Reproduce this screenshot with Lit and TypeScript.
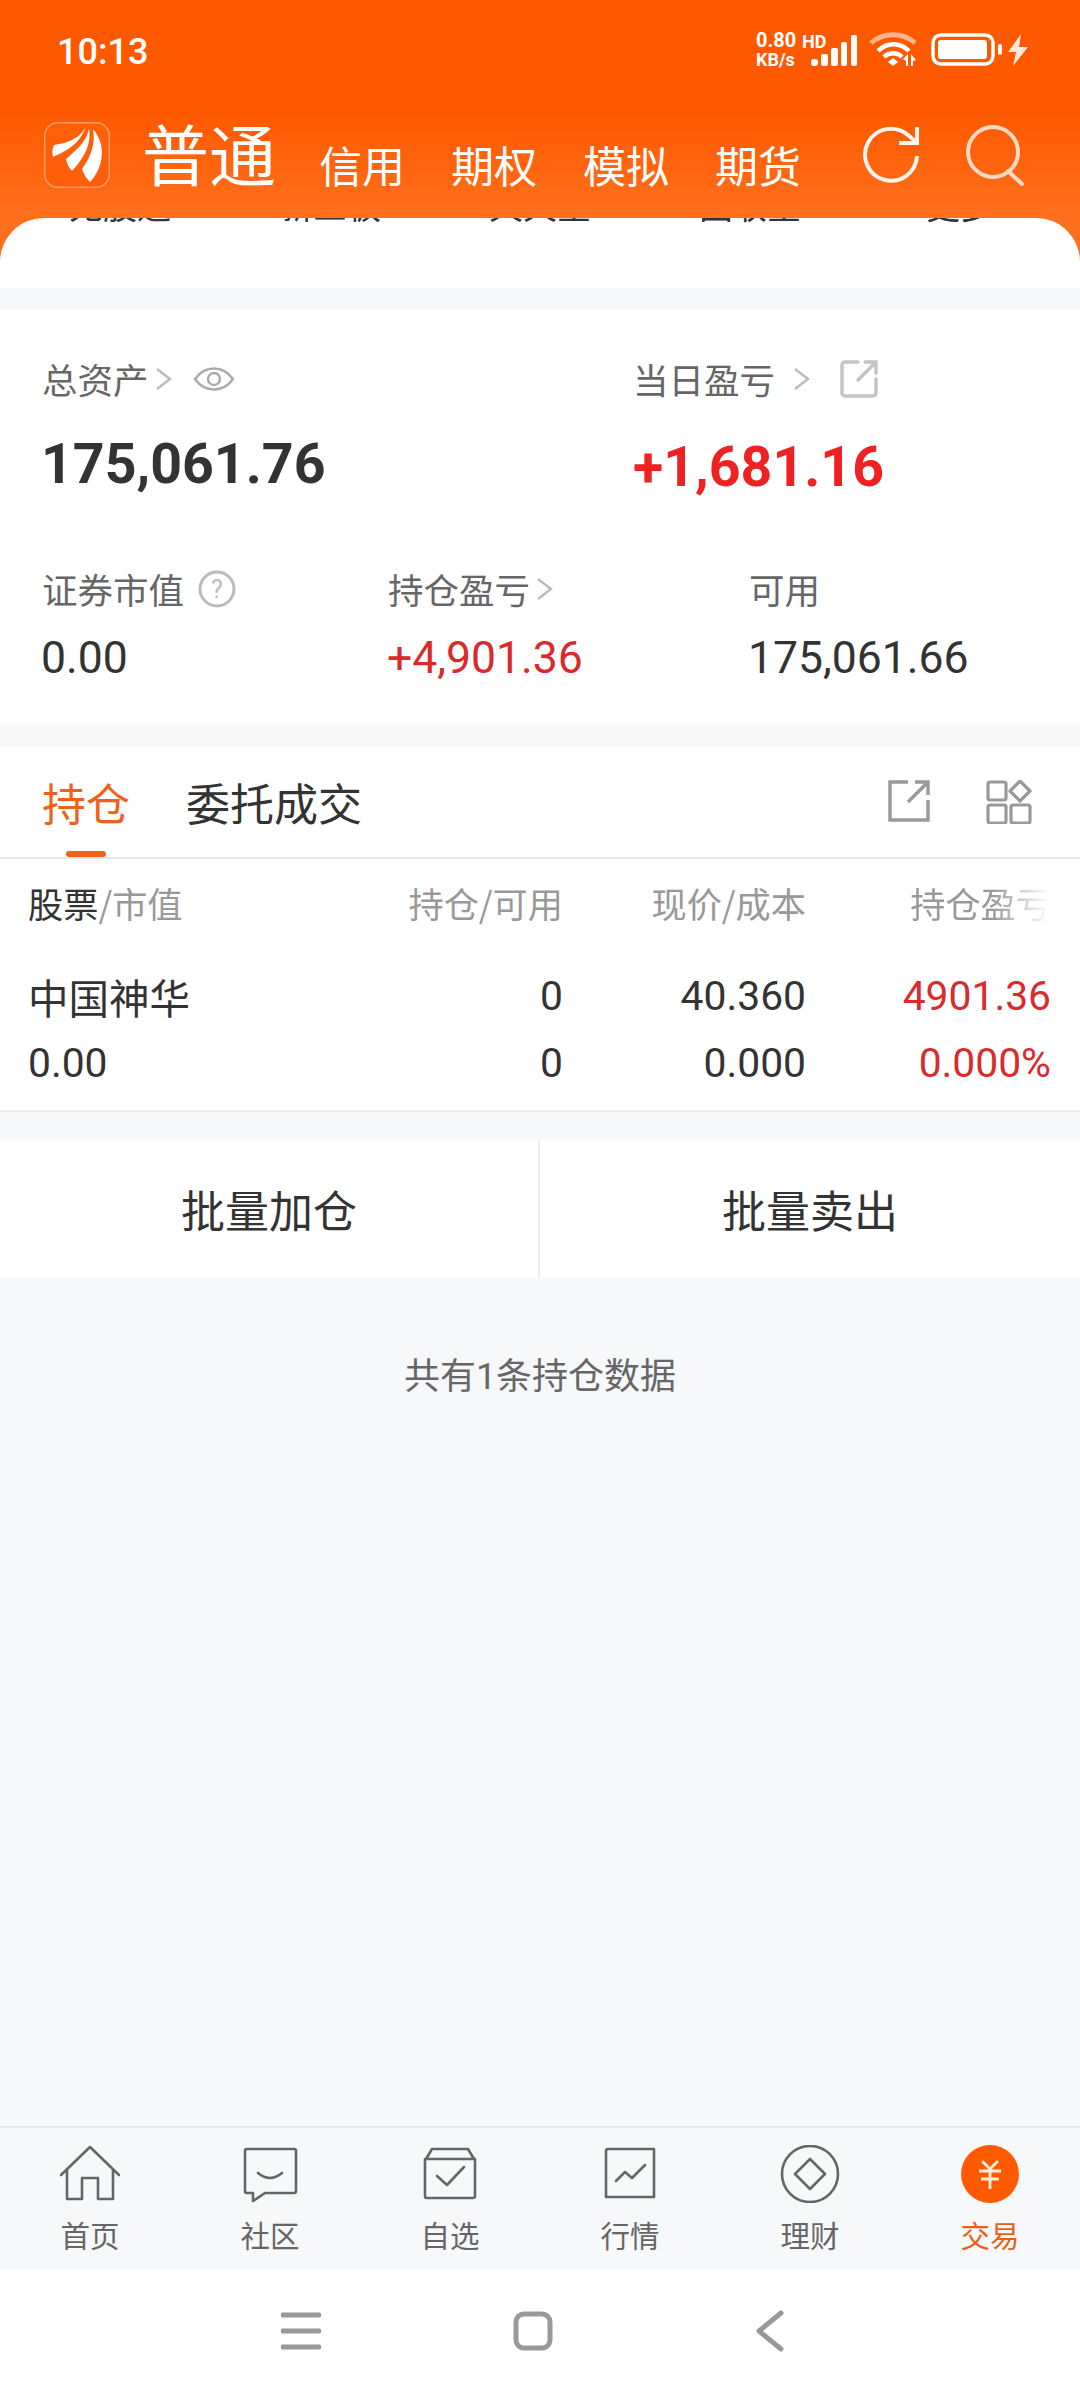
import { LitElement, html, css, svg } from "lit";
import { customElement } from "lit/decorators.js";

const navIcons = [
  svg`<path d="M1 30 L30 2 L59 30 M7 25 V54 H22 V33 H38 V54 H53 V25" />`,
  svg`<path d="M7 4 H54 a2 2 0 0 1 2 2 V46 a2 2 0 0 1 -2 2 H25 L13 56 V48 H7 a2 2 0 0 1 -2 -2 V6 a2 2 0 0 1 2 -2 Z M18 28 Q30 38 42 28" />`,
  svg`<path d="M6 14 L12 4 H48 L54 14 M5 14 H55 V51 a2 2 0 0 1 -2 2 H7 a2 2 0 0 1 -2 -2 Z M17 31 L27 40 L44 22" />`,
  svg`<path d="M8 4 H54 V52 H6 V6 a2 2 0 0 1 2 -2 Z M16 36 L25 27 L32 33 L45 20" />`,
  svg`<circle cx="30" cy="29" r="28" /><path d="M30 14 L45 29 L30 44 L15 29 Z" />`,
];
const navItems = ["首页", "社区", "自选", "行情", "理财"];

@customElement("app-root")
export class AppRoot extends LitElement {
  static styles = css`
    :host {
      display: flex;
      flex-direction: column;
      width: 1080px;
      height: 2400px;
      background: #f7f8fa;
      font-family: Roboto, "Noto Sans CJK SC", sans-serif;
      color: #333;
      overflow: hidden;
    }
    svg { display: block; flex: none; }
    .top {
      height: 218px;
      flex: none;
      background: linear-gradient(#ff5900 0, #ff5900 112px, #ff701d 218px);
      color: #fff;
      box-sizing: border-box;
      position: relative;
      z-index: 2;
    }
    .status {
      height: 100px;
      display: flex;
      align-items: center;
      padding: 0 57px;
      box-sizing: border-box;
    }
    .time { font-size: 36px; font-weight: 500; flex: 1; padding-top: 3px; }
    .speed { display: flex; flex-direction: column; font-weight: 700; font-size: 20px; line-height: 19px; width: 54px; }
    .speed span:last-child { font-size: 18px; }
    .hd { font-size: 18px; font-weight: 700; position: absolute; left: 802px; top: 31px; }
    .status-icons { display: flex; align-items: center; margin-right: -6px; }
    .tabs {
      display: flex;
      align-items: center;
      padding-left: 44px;
      height: 88px;
      margin-top: 11px;
    }
    .logo { margin-right: 32px; }
    .main-tab { font-size: 67px; line-height: 88px; font-family: "Noto Sans CJK SC", sans-serif; margin-right: 43px; margin-top: -6px; width: 134px; white-space: nowrap; }
    .sub-tab { font-size: 43px; margin-right: 46px; line-height: 1; margin-top: 19px; font-family: "Noto Sans CJK SC", sans-serif; white-space: nowrap; }
    .top-icons { display: flex; margin-left: 15px; gap: 46px; }
    .corner { background: #ff701d; flex: none; }
    .peek {
      height: 70px;
      background: #fff;
      border-radius: 44px 44px 0 0;
      overflow: hidden;
      display: grid;
      grid-template-columns: repeat(5, 1fr);
      padding: 0 15px;
    }
    .peek span {
      text-align: center;
      font-size: 34px;
      line-height: 40px;
      margin-top: -33px;
      height: 40px;
      color: #333;
      font-family: "Noto Sans CJK SC", sans-serif;
    }
    .summary {
      flex: none;
      margin-top: 22px;
      height: 414px;
      box-sizing: border-box;
      background: #fff;
      padding: 46px 0 0 42px;
    }
    .row1 { display: grid; grid-template-columns: 591px 1fr; }
    .row2 { display: grid; grid-template-columns: 346px 361px 1fr; margin-top: 65px; }
    .label {
      display: flex;
      align-items: center;
      font-size: 35.5px;
      line-height: 46px;
      color: #666;
      font-family: "Noto Sans CJK SC", sans-serif;
    }
    .big { font-size: 55.5px; font-weight: 700; line-height: 66px; margin-top: 30px; margin-left: -1px; }
    .red-big { color: #ee2222; margin-top: 33px; margin-left: 0; }
    .val { font-size: 44.5px; line-height: 52px; margin-top: 20px; margin-left: -1px; }
    .red { color: #d92b2b; }
    .holdings { flex: none; margin-top: 23px; background: #fff; }
    .h-tabs {
      height: 112px;
      box-sizing: border-box;
      border-bottom: 2px solid #e6e6e6;
      display: flex;
      align-items: center;
      padding: 0 48px 0 42px;
      font-size: 44px;
      position: relative;
      font-family: "Noto Sans CJK SC", sans-serif;
    }
    .active { color: #f0601a; margin-right: 56px; position: relative; }
    .active::after {
      content: "";
      position: absolute;
      left: 24px;
      bottom: -23px;
      width: 40px;
      height: 6px;
      border-radius: 3px;
      background: #f0601a;
    }
    .h-icons { margin-left: auto; display: flex; gap: 56px; }
    .grid {
      display: grid;
      grid-template-columns: 272px 263px 243px 245px;
      padding: 0 29px 0 28px;
      align-items: center;
    }
    .thead { height: 86px; font-size: 35.2px; color: #999; font-family: "Noto Sans CJK SC", sans-serif; }
    .thead b { font-weight: 400; color: #333; }
    .r { text-align: right; white-space: nowrap; }
    .fade { -webkit-mask-image: linear-gradient(90deg, #000 58%, rgba(0,0,0,.08) 96%); mask-image: linear-gradient(90deg, #000 58%, rgba(0,0,0,.08) 96%); }
    .tbody {
      font-size: 40.8px;
      line-height: 67px;
      padding-top: 18px;
      padding-bottom: 13px;
      border-bottom: 2px solid #ececec;
    }
    .name { font-size: 40.5px; font-family: "Noto Sans CJK SC", sans-serif; }
    .actions { flex: none; display: grid; grid-template-columns: 1fr 1fr; margin-top: 28px; height: 138px; background: #fff; }
    .actions div { display: flex; align-items: center; justify-content: center; font-size: 44px; font-family: "Noto Sans CJK SC", sans-serif; }
    .actions div:first-child { border-right: 2px solid #eeeeee; }
    .count { flex: 1; text-align: center; font-size: 36px; color: #666; padding-top: 75px; line-height: 48px; font-family: Roboto, "Noto Sans CJK SC", sans-serif; }
    .nav {
      flex: none;
      height: 144px;
      box-sizing: border-box;
      border-top: 2px solid #e6e7e9;
      display: grid;
      grid-template-columns: repeat(6, 180px);
      background: #f7f8fa;
    }
    .nav-item { display: flex; flex-direction: column; align-items: center; padding-top: 17px; font-size: 29.5px; color: #666; font-family: "Noto Sans CJK SC", sans-serif; }
    .nav-item svg { fill: none; stroke: #666; stroke-width: 2.6; stroke-linejoin: round; stroke-linecap: round; }
    .nav-item span { line-height: 40px; margin-top: 11px; }
    .nav-item.on { color: #e8601a; }
    .sys {
      flex: none;
      height: 130px;
      box-sizing: border-box;
      padding: 0 0 8px 281px;
      background: #fff;
      display: flex;
      align-items: center;
      gap: 192px;
    }
    .sys svg { fill: none; stroke: #999; stroke-width: 5; stroke-linecap: round; stroke-linejoin: round; }
  `;

  private chev() {
    return html`<svg width="18" height="26" viewBox="0 0 18 26" style="margin-left:6px"><path d="M2 3 L15 13 L2 23" fill="none" stroke="#bbb" stroke-width="2.4"/></svg>`;
  }

  render() {
    return html`
      <div class="top">
        <div class="status">
          <div class="time">10:13</div>
          <div class="speed"><span>0.80</span><span>KB/s</span></div>
          <span class="hd">HD</span>
          <div class="status-icons">
            <svg width="48" height="34" viewBox="0 0 48 34" style="margin-top:2px">
              <g fill="#fff">
                <rect x="1" y="25" width="7" height="7" rx="3"/>
                <rect x="11" y="20" width="7" height="12" rx="2"/>
                <rect x="21" y="14" width="7" height="18" rx="2"/>
                <rect x="31" y="8" width="6" height="24" rx="2"/>
                <rect x="41" y="1" width="6" height="31" rx="2"/>
              </g>
            </svg>
            <svg width="50" height="36" viewBox="0 0 50 36" style="margin-left:11px">
              <path d="M2 11 C14 0 34 0 46 11" fill="none" stroke="#ffb38a" stroke-width="5"/>
              <path d="M9 19 C18 10 31 10 40 19" fill="none" stroke="#fff" stroke-width="4.5"/>
              <path d="M15 25 C20 20 28 20 33 25" fill="none" stroke="#fff" stroke-width="4.5"/>
              <path d="M19 30 L24 26 L29 30 L24 34 Z" fill="#fff"/>
              <path d="M34 27 L39 22 V34 H37 V29 Z M42 22 L47 28 L44 29 V34 H42 Z" fill="#fff"/>
            </svg>
            <svg width="72" height="34" viewBox="0 0 72 34" style="margin-left:12px">
              <rect x="2" y="2" width="60" height="29" rx="8" fill="none" stroke="#fff" stroke-width="3.5"/>
              <rect x="7" y="7" width="49" height="19" rx="3" fill="#fff"/>
              <rect x="67" y="11" width="4" height="11" rx="2" fill="#fff"/>
            </svg>
            <svg width="22" height="32" viewBox="0 0 22 32" style="margin-left:4px">
              <path d="M14 0 L1 18 H9 L6 32 L21 13 H12 Z" fill="#ffe9dd"/>
            </svg>
          </div>
        </div>
        <div class="tabs">
          <svg class="logo" width="66" height="66" viewBox="0 0 66 66">
            <rect x=".75" y=".75" width="64.5" height="64.5" rx="13" fill="#ff5f08" stroke="#ff9a66" stroke-width="1.5"/>
            <g fill="#fff">
              <path d="M41 6 C36 16 24 21 10 23 C8 27 8 31 9 35 C22 29 36 22 41 6 Z"/>
              <path d="M45 6 C43 20 32 28 22 37 C23 42 25 46 28 49 C38 38 48 24 45 6 Z"/>
              <path d="M49 7 C52 22 46 36 38 47 C40 53 43 57 46 60 C58 48 64 24 49 7 Z"/>
            </g>
          </svg>
          <span class="main-tab">普通</span>
          <span class="sub-tab">信用</span>
          <span class="sub-tab">期权</span>
          <span class="sub-tab">模拟</span>
          <span class="sub-tab">期货</span>
          <div class="top-icons">
            <svg width="58" height="60" viewBox="0 0 58 60" fill="none" stroke="#fff4ec" stroke-width="4">
              <path d="M55 32 A26 26 0 1 1 46 11 L55 19"/>
              <path d="M55 3 V19 H37"/>
            </svg>
            <svg width="58" height="62" viewBox="0 0 58 62" fill="none" stroke="#ffd9c4" stroke-width="4">
              <circle cx="27" cy="28" r="25"/>
              <path d="M42 47 L56 60" stroke-linecap="round"/>
            </svg>
          </div>
        </div>
      </div>

      <div class="corner">
        <div class="peek">
          <span>无股通</span><span>新三板</span><span>天天宝</span><span>固收宝</span><span>更多</span>
        </div>
      </div>

      <div class="summary">
        <div class="row1">
          <div>
            <div class="label">总资产${this.chev()}
              <svg width="42" height="30" viewBox="0 0 42 30" style="margin-left:20px" fill="none" stroke="#aaa" stroke-width="2.4">
                <path d="M2 15 C12 1 30 1 40 15 C30 29 12 29 2 15 Z"/>
                <circle cx="21" cy="15" r="6"/>
              </svg>
            </div>
            <div class="big">175,061.76</div>
          </div>
          <div>
            <div class="label">当日盈亏<span style="width:12px"></span>${this.chev()}
              <svg width="38" height="38" viewBox="0 0 38 38" style="margin-left:29px" fill="none" stroke="#c4c4c4" stroke-width="3.4" stroke-linecap="round">
                <path d="M18 2 H5 a3 3 0 0 0 -3 3 V33 a3 3 0 0 0 3 3 H33 a3 3 0 0 0 3 -3 V19"/>
                <path d="M18 20 L35 3 M25 2 H36 V13"/>
              </svg>
            </div>
            <div class="big red-big">+1,681.16</div>
          </div>
        </div>
        <div class="row2">
          <div>
            <div class="label">证券市值
              <svg width="38" height="38" viewBox="0 0 38 38" style="margin-left:14px">
                <circle cx="19" cy="19" r="17" fill="none" stroke="#bbb" stroke-width="3"/>
                <text x="19" y="28" text-anchor="middle" font-size="25" fill="#bbb" font-family="Roboto">?</text>
              </svg>
            </div>
            <div class="val">0.00</div>
          </div>
          <div>
            <div class="label">持仓盈亏${this.chev()}</div>
            <div class="val red">+4,901.36</div>
          </div>
          <div>
            <div class="label">可用</div>
            <div class="val">175,061.66</div>
          </div>
        </div>
      </div>

      <div class="holdings">
        <div class="h-tabs">
          <span class="active">持仓</span>
          <span>委托成交</span>
          <div class="h-icons">
            <svg width="42" height="42" viewBox="0 0 42 42" fill="none" stroke="#999" stroke-width="3.4">
              <path d="M20 2 H2 V40 H40 V20"/>
              <path d="M20 22 L39 3 M27 2 H40 V15"/>
            </svg>
            <svg width="46" height="44" viewBox="0 0 46 44" fill="none" stroke="#999" stroke-width="3.2" stroke-linejoin="round">
              <rect x="2" y="2" width="18" height="18" rx="2"/>
              <rect x="2" y="25" width="18" height="18" rx="2"/>
              <rect x="25" y="25" width="19" height="18" rx="2"/>
              <path d="M34 1 L44 11 L34 21 L24 11 Z"/>
            </svg>
          </div>
        </div>
        <div class="grid thead">
          <div style="white-space:nowrap"><b>股票</b>/市值</div>
          <div class="r">持仓/可用</div>
          <div class="r">现价/成本</div>
          <div class="r"><span class="fade" style="display:inline-block">持仓盈亏</span></div>
        </div>
        <div class="grid tbody">
          <div class="name">中国神华</div>
          <div class="r">0</div>
          <div class="r">40.360</div>
          <div class="r red">4901.36</div>
          <div>0.00</div>
          <div class="r">0</div>
          <div class="r">0.000</div>
          <div class="r red">0.000%</div>
        </div>
      </div>

      <div class="actions">
        <div>批量加仓</div>
        <div>批量卖出</div>
      </div>

      <div class="count">共有1条持仓数据</div>

      <div class="nav">
        ${navItems.map(
          (t, i) => html`<div class="nav-item">
            <svg width="60" height="58" viewBox="0 0 60 58">${navIcons[i]}</svg>
            <span>${t}</span>
          </div>`
        )}
        <div class="nav-item on">
          <svg width="60" height="58" viewBox="0 0 60 58" style="stroke:none">
            <circle cx="30" cy="29" r="29" fill="#ff5a00"/>
            <path d="M22 16 L30 24 L38 16 M19 26 H41 M21 34 H39 M30 24 V44" fill="none" stroke="#ffeede" stroke-width="2.8" stroke-linecap="butt"/>
          </svg>
          <span>交易</span>
        </div>
      </div>

      <div class="sys">
        <svg width="40" height="40" viewBox="0 0 40 40"><path d="M2 4 H38 M2 20 H38 M2 36 H38"/></svg>
        <svg width="40" height="40" viewBox="0 0 40 40"><rect x="3" y="3" width="34" height="34" rx="8"/></svg>
        <svg width="30" height="42" viewBox="0 0 30 42" style="margin-left:10px"><path d="M26 3 L4 21 L26 39"/></svg>
      </div>
    `;
  }
}
